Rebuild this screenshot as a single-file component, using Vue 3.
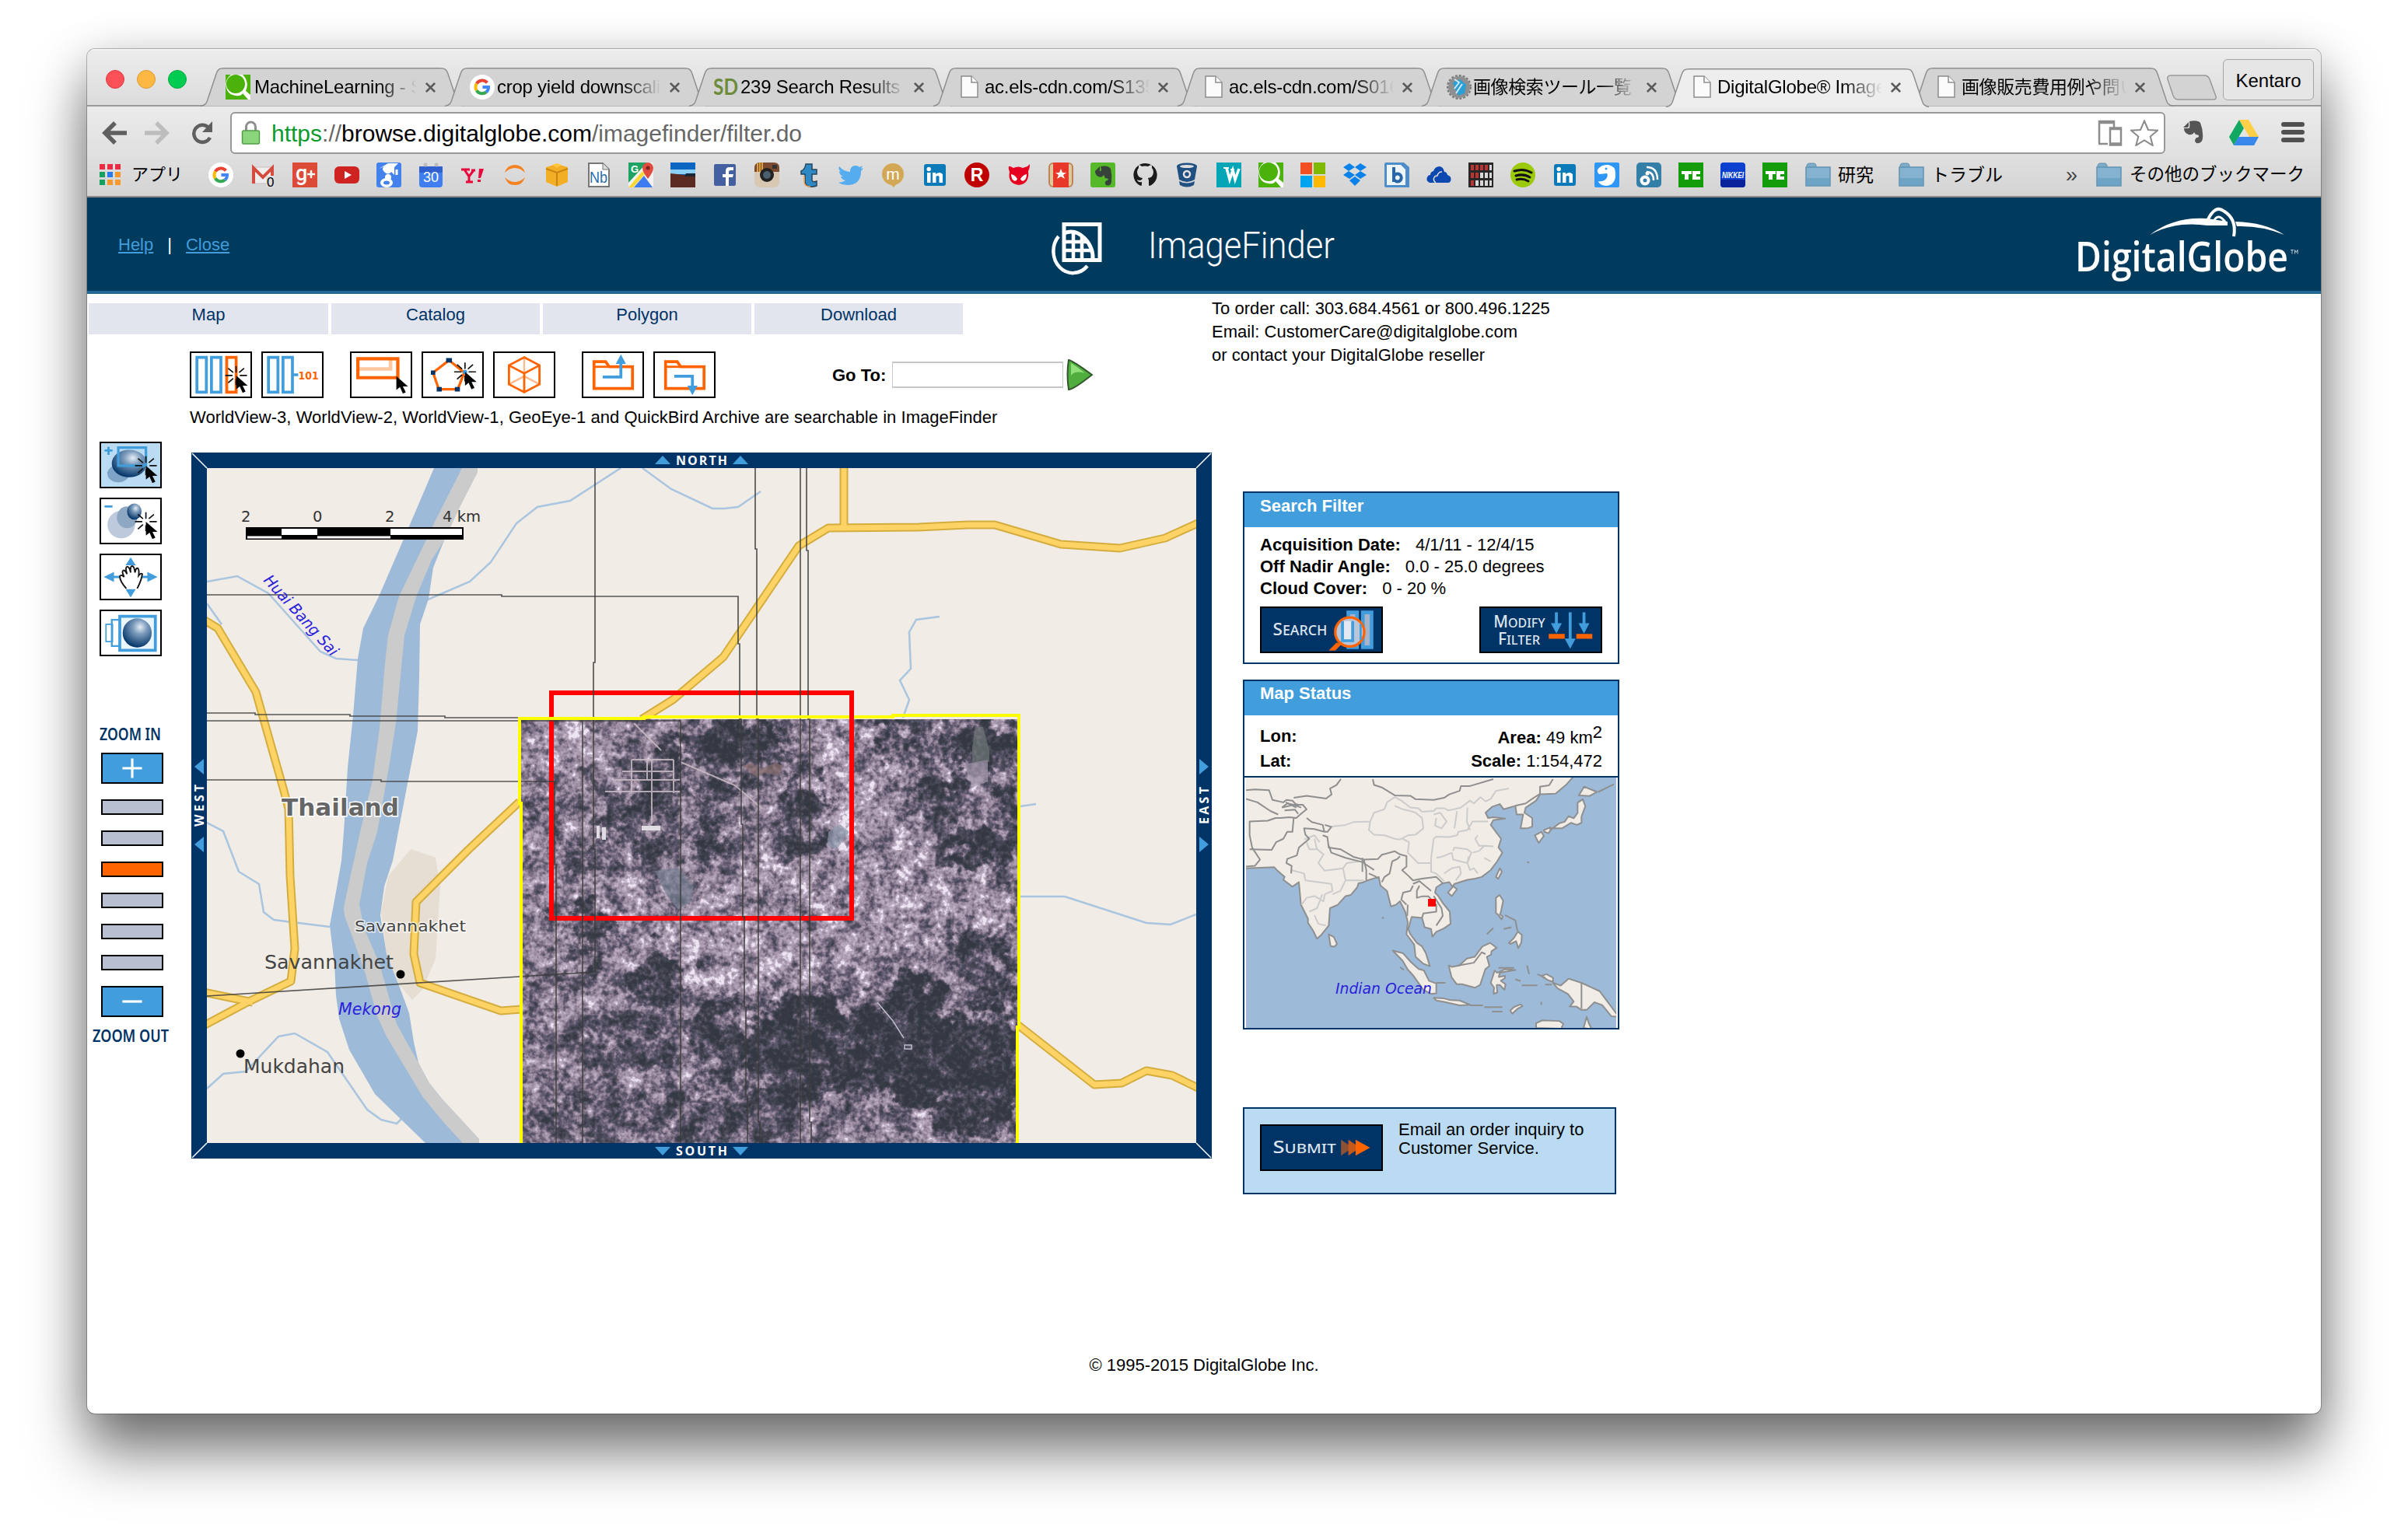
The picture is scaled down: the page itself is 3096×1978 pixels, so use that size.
<script setup>
const tabs = [
  { title: 'MachineLearning - S', icon: 'q', x: 69 },
  { title: 'crop yield downscaling', icon: 'g', x: 67 },
  { title: '239 Search Results f', icon: 'sd', x: 66 },
  { title: 'ac.els-cdn.com/S1352', icon: 'page', x: 66 },
  { title: 'ac.els-cdn.com/S0168', icon: 'page', x: 66 },
  { title: '画像検索ツール一覧 |', icon: 'globe', x: 66, cjk: true },
  { title: 'DigitalGlobe® Image F', icon: 'page', x: 66, active: true },
  { title: '画像販売費用例や問い合', icon: 'page', x: 66, cjk: true },
]

const google = '<path d="M24 9A10.5 10.5 0 0 0 7 10.5" stroke="#ea4335"/><path d="M7 10.5A10.5 10.5 0 0 0 7 21.5" stroke="#fbbc05"/><path d="M7 21.5A10.5 10.5 0 0 0 22.5 24" stroke="#34a853"/><path d="M22.5 24A10 10 0 0 0 26 16H16.5" stroke="#4285f4"/>'
const gIcon = `<circle cx="16" cy="16" r="16" fill="#fff"/><g transform="translate(3.2 3.2) scale(.8)" fill="none" stroke-width="5">${google}</g>`
const qIcon = '<rect width="32" height="32" fill="#fff"/><path d="M0 0h7Q-3 8 2 20Q5 26 13 27Q20 28 22 24L29 32H0zM22 0h10v26l-6-5Q31 9 22 0z" fill="#4bb20b"/><ellipse cx="13" cy="12" rx="12" ry="12" fill="#4bb20b"/>'
const inIcon = '<rect x="2" y="2" width="28" height="28" rx="3" fill="#0a7ab8"/><rect x="6" y="13" width="4.500" height="13" fill="#fff"/><circle cx="8.200" cy="8.500" r="2.700" fill="#fff"/><path d="M13 13h4v2q5-4 9 0v11h-4.500v-8q-2-2-4 0v8H13z" fill="#fff"/>'
const tcIcon = '<rect width="32" height="32" fill="#149c0b"/><path d="M4 11h13v4h-4v7H8v-7H4zM18 11h10v4h-5v3h5v4H18z" fill="#fff"/>'

const tabIcons = {
  q: qIcon,
  g: gIcon,
  sd: '<text x="-1" y="26" font-family="Lato" font-size="29" font-weight="bold" fill="#6c8c3a" textLength="32" lengthAdjust="spacingAndGlyphs">SD</text>',
  page: '<path d="M4 2h13l8 8v19H4z" fill="#fbfbfb" stroke="#8d8d8d" stroke-width="1.500"/><path d="M17 2v8h8" fill="#fff" stroke="#8d8d8d" stroke-width="1.500"/>',
  globe: '<circle cx="16" cy="16" r="14" fill="#8d8f90"/><circle cx="16" cy="16" r="15" fill="none" stroke="#777" stroke-width="2" stroke-dasharray="3 2"/><path d="M8 10l9-4 8 7-2 11-8 3-4-8z" fill="#299fd5"/><path d="M10 6l6 4-6 8M20 12l-8 12" stroke="#cfe9f5" stroke-width="2" fill="none"/>',
}

const bookmarks = [
  gIcon,
  '<path d="M3 6h26v21H3z" fill="#eee" stroke="#c9c0bd"/><path d="M4 27V7l12 12L28 7v20" fill="none" stroke="#d54b3d" stroke-width="4"/><rect x="20" y="17" width="11" height="15" fill="#ddd"/><text x="21" y="31" font-size="17" font-family="Liberation Sans" fill="#000">0</text>',
  '<rect width="32" height="32" fill="#dc4a38"/><text x="4" y="23" font-family="Roboto" font-size="27" font-weight="500" fill="#fff">g</text><path d="M24 10v10M19 15h10" stroke="#fff" stroke-width="2.500"/>',
  '<rect y="5" width="32" height="22" rx="6" fill="#cf2322"/><path d="M13 11l9 5-9 5z" fill="#fff"/>',
  '<rect width="32" height="32" rx="3" fill="#4382ec"/><path d="M3 8L15 1h13l-5 5v10l-4-4q-4 5-9 0-4-4 0-7z" fill="#fff"/><circle cx="15" cy="19" r="4" fill="#fff"/><ellipse cx="13" cy="26" rx="8" ry="6" fill="#fff"/><ellipse cx="13" cy="26" rx="4" ry="2.500" fill="#4382ec"/><path d="M26 9v7" stroke="#fff" stroke-width="3"/>',
  '<path d="M1 5h30v23q0 4-4 4H5q-4 0-4-4z" fill="#3f7df0"/><path d="M1 5h30v8H1z" fill="#3060d0"/><circle cx="9" cy="3" r="2.500" fill="#bbb"/><circle cx="23" cy="3" r="2.500" fill="#bbb"/><text x="16" y="25" text-anchor="middle" font-size="18" font-family="Liberation Sans" fill="#fff">30</text>',
  '<path d="M1 9h11M5 9l6 9 6-8M14 10h5M11 17v7M7 25h9" stroke="#e8063a" stroke-width="3" fill="none"/><path d="M24 8h6l-4 12h-3zM22 22h4v3h-4z" fill="#e8063a"/>',
  '<path d="M3 13Q6 3 16 3T29 13Q23 7 16 7T3 13zM3 19Q6 29 16 29T29 19Q23 25 16 25T3 19z" fill="#f58220"/>',
  '<path d="M2 6l14-4 14 4v19l-14 6-14-6z" fill="#f2ae24"/><path d="M2 8l14 5 14-5M16 13v17" stroke="#c98512" stroke-width="2" fill="none"/><path d="M10 3l6-2 6 2-6 4z" fill="#ffc83d"/>',
  '<path d="M3 1h18l8 8v22H3z" fill="#fff" stroke="#777" stroke-width="2"/><path d="M21 1v8h8" fill="#ddd" stroke="#777"/><text x="4" y="26" font-family="Liberation Sans" font-size="21" fill="#2a6ea5" textLength="23" lengthAdjust="spacingAndGlyphs">Nb</text>',
  '<rect x="0" y="0" width="32" height="32" rx="3" fill="#f2f2f2"/><path d="M0 0h24L0 26z" fill="#1ea362"/><path d="M0 32L18 11l3 4L6 32z" fill="#fdd835"/><path d="M7 32L20 17l11 15z" fill="#3f7bf0"/><path d="M25 0a7 7 0 0 1 7 7q0 5-7 14-7-9-7-14a7 7 0 0 1 7-7z" fill="#df4b3e"/><circle cx="25" cy="7" r="2.500" fill="#7b231c"/><text x="3" y="13" font-size="13" font-family="Liberation Sans" font-weight="bold" fill="#fff">G</text>',
  '<rect width="32" height="32" fill="#0b66c2"/><path d="M0 9h32v6H0z" fill="#8cd0f5"/><path d="M0 14l18 2 14 1v15H0z" fill="#5b2a20"/><path d="M20 14h12v4H18z" fill="#1c2733"/>',
  '<rect x="2" y="2" width="28" height="28" rx="2" fill="#4460a0"/><path d="M17 30V19h-4v-4h4v-4q0-5 5-5h5v4h-3q-3 0-3 2v3h6l-1 4h-5v11z" fill="#fff"/>',
  '<rect y="0" width="32" height="32" rx="7" fill="#d8c8b2"/><path d="M0 12V7q0-7 7-7h18q7 0 7 7v5z" fill="#7b4a30"/><path d="M4 1v11M7 0v12M10 0v12" stroke="#d9a03c" stroke-width="2"/><circle cx="16" cy="16" r="9" fill="#222"/><circle cx="16" cy="16" r="5" fill="#4a5f6e"/><rect x="23" y="3" width="6" height="5" fill="#333"/>',
  '<path d="M12 2h8v7h6v6h-6v8q1 3 6 1v6q-14 4-15-6v-9H6V11q5-2 6-9z" fill="#2f89c5" stroke="#27455c" stroke-width="1.500"/><path d="M10 17v8q0 6 8 6" stroke="#f0a050" stroke-width="1.500" fill="none"/>',
  '<path d="M1 5q6 7 14 7 0-8 7-8 3 0 5 2l4-2-2 4 3-1-3 4q0 18-18 18-6 0-11-3 5 0 9-3-5-1-6-5h3q-5-2-5-7l3 1q-5-3-3-7z" fill="#55acee"/>',
  '<circle cx="16" cy="15" r="14" fill="#d2a855"/><path d="M12 27l5 5 4-5z" fill="#d2a855"/><text x="16" y="22" text-anchor="middle" font-family="Liberation Sans" font-size="21" fill="#fff">m</text>',
  inIcon,
  '<circle cx="16" cy="16" r="16" fill="#bf0000"/><text x="16" y="24" text-anchor="middle" font-family="Liberation Sans" font-weight="bold" font-size="23" fill="#fff">R</text>',
  '<path d="M3 9Q2 4 5 5l4 2q6-3 12 0l6-2 3-3q0 6-2 9 2 16-12 18Q1 27 4 12z" fill="#e60020"/><path d="M6 15q5 1 8 6-1 4-5 2-3-3-3-8zM26 15q-5 1-8 6 1 4 5 2 3-3 3-8z" fill="#fff"/>',
  '<rect x="1" y="1" width="30" height="30" rx="5" fill="#dfc7a0" stroke="#c08353" stroke-width="2"/><rect x="6" y="0" width="20" height="32" fill="#e8382a"/><path d="M16 8l2 5h5l-4 3 2 5-5-3-5 3 2-5-4-3h5z" fill="#fff"/>',
  '<rect width="32" height="32" rx="3" fill="#55b92a"/><path d="M6 11l6-6v5q0 1-1 1zM13 5q10-2 13 3 2 8 1 17-1 6-7 4-3-4 1-6 2 0 2-2l-4-1-2-4q-2 4-7 2-4-2-4-7h7q1 0 1-2z" fill="#37423a"/>',
  '<path d="M16 1a15 15 0 0 0-5 29q1 0 1-2v-3q-5 1-6-3 3 2 6 0l1-2q-7-1-7-8 0-3 2-5v-4q2 0 4 2 4-1 8 0 3-2 5-2v4q2 2 2 5 0 7-7 8l1 3v6q0 1 1 1A15 15 0 0 0 16 1z" fill="#1b1b1b"/>',
  '<ellipse cx="16" cy="5" rx="13" ry="4.500" fill="#205081"/><path d="M3 5l3 17q10 6 20 0l3-17z" fill="#205081"/><ellipse cx="16" cy="5" rx="9" ry="2" fill="#dedede"/><circle cx="16" cy="15" r="4" fill="none" stroke="#e4e4e4" stroke-width="2.500"/><path d="M6 24q10 5 20 0l-1 5q-9 5-18 0z" fill="#205081"/>',
  '<rect width="32" height="32" fill="#03a5b7"/><path d="M13 7l4 15 4-12 3 12 5-14" stroke="#fff" stroke-width="3.500" fill="none"/><path d="M9 7h7M18 9h5" stroke="#fff" stroke-width="2"/>',
  qIcon,
  '<path d="M0 0h15v15H0z" fill="#f25022"/><path d="M17 0h15v15H17z" fill="#7fba00"/><path d="M0 17h15v15H0z" fill="#00a4ef"/><path d="M17 17h15v15H17z" fill="#ffb900"/>',
  '<path d="M9 1l7 5-8 5-7-5zM23 1l8 5-8 5-7-5zM1 16l7-5 8 5-7 5zM31 16l-8-5-7 5 7 5zM9 23l7-5 7 5-7 7z" fill="#0a82ea"/>',
  '<path d="M2 0h23l7 6v26H2q-2 0-2-2V2q0-2 2-2z" fill="#4f8dc8"/><path d="M3 3h18l6 6v20H3z" fill="#eef5fb"/><path d="M12 6v19M12 18a5 5 0 1 1 0 3" stroke="#2967a8" stroke-width="4" fill="none"/>',
  '<path d="M4 26q-5-2-3-7 1-3 4-3 0-4 4-5 2-6 8-6 5 1 6 7 3 0 4 4 6 2 4 8-1 2-3 2z" fill="#0d47b0"/><path d="M12 26q-4-3-2-7 1-2 4-2 1-5 6-5" stroke="#dedede" stroke-width="1.500" fill="none"/>',
  '<rect width="32" height="32" fill="#272727"/><path d="M3 3h4v7H3zM9 3h4v7H9zM15 3h4v7h-4zM21 3h4v7h-4zM3 13h4v7H3zM9 13h4v7H9zM3 23h4v7H3z" fill="#b33"/><path d="M27 3h3v7h-3zM15 13h4v7h-4zM21 13h4v7h-4zM27 13h3v7h-3zM9 23h4v7H9zM15 23h4v7h-4zM21 23h4v7h-4zM27 23h3v7h-3z" fill="#d8d8d8"/>',
  '<circle cx="16" cy="16" r="16" fill="#9aca0b"/><path d="M5 11q12-4 22 2M7 17q10-3 18 2M8 22q8-2 15 2" stroke="#111" stroke-width="3" fill="none" stroke-linecap="round"/>',
  inIcon,
  '<rect width="32" height="32" rx="2" fill="#2e97f5"/><path d="M4 9Q9 2 18 3q9 2 9 10 1 10-5 15-7 4-14 0-3-2-3-4 6 1 10-3 3-4 1-7l-10 1Q3 12 4 9z" fill="#fff"/><circle cx="15" cy="8" r="1.500" fill="#2e97f5"/>',
  '<rect width="32" height="32" rx="5" fill="#337fa8"/><circle cx="11" cy="23" r="6.500" fill="#fff"/><circle cx="11" cy="23" r="2.500" fill="#337fa8"/><path d="M13 12q9 0 9 11M13 6q14 0 14 16" stroke="#fff" stroke-width="2.500" fill="none"/><circle cx="14" cy="14" r="2.500" fill="#fff"/>',
  tcIcon,
  '<rect width="32" height="32" rx="4" fill="#0a3fd0"/><path d="M0 22h32v6q0 4-4 4H4q-4 0-4-4z" fill="#08239c"/><text x="2" y="20" font-size="10" font-family="Liberation Sans" font-style="italic" font-weight="bold" fill="#fff" textLength="28" lengthAdjust="spacingAndGlyphs">NIKKEI</text>',
  tcIcon,
]
const folder = '<path d="M2 7V3l2-2h8l2 2v4z" fill="#7fabc6" stroke="#6794b0"/><rect x="1" y="6" width="31" height="24" fill="#84b2cf" stroke="#5f93b3" stroke-width="1.500"/><path d="M2 20h29v9H2z" fill="#6da3c4"/>'

const cursor = '<path d="M0 0l0 19 5-4 4 9 4-2-4-8h7z" fill="#000"/>'
const burst = '<path d="M0-4v-9M-4-4l-7-6M-5 0h-10M-4 4l-7 6M0 5v8M4-4l7-6M5 0h10" stroke="#111" stroke-width="1.800"/>'
const folderShape = '<path d="M14 49V12h16l5 7h32v30z" stroke="#ff6400" stroke-width="4" fill="none"/><path d="M14 19h20" stroke="#ff6400" stroke-width="3"/>'

const toolGroups = [
  [
    `<g fill="none" stroke-width="4"><path d="M7 6h13v48H7zM27 6h13v48H27z" stroke="#419ddb"/><path d="M48 6h13v48H48z" stroke="#ff6400"/></g><g transform="translate(61 31)">${burst}${cursor}</g>`,
    '<g fill="none" stroke-width="4" stroke="#419ddb"><path d="M7 6h13v48H7zM27 6h13v48H27zM42 30h6"/></g><text x="48" y="36" font-family="DejaVu Sans" font-weight="bold" font-size="15" fill="#ff6400" textLength="28" lengthAdjust="spacingAndGlyphs">101</text>',
  ],
  [
    `<path d="M53 8v14H8" stroke="#ffc8a0" stroke-width="5" fill="none"/><path d="M8 8h55v26H8z" stroke="#ff6400" stroke-width="4.500" fill="none"/><g transform="translate(61 32)">${cursor}</g>`,
    `<path d="M35 10L13 27l8 23h26l9-23z" stroke="#ff6400" stroke-width="3.500" fill="none"/><path d="M31 7h8v6h-8zM10 24h6v6h-6zM18 47h7v6h-7zM43 47h7v6h-7z" fill="#036"/><g transform="translate(57 26)">${burst}<circle r="3" fill="#419ddb"/>${cursor}</g>`,
    '<g fill="none"><path d="M40 6v22M19 43l21-11 21 11" stroke="#ffb98c" stroke-width="2.500"/><path d="M40 6l21 11v26L40 54 19 43V17zM19 17l21 11 21-11M40 28v26" stroke="#ff6400" stroke-width="3"/></g>',
  ],
  [
    `${folderShape}<path d="M26 33h25V12" stroke="#419ddb" stroke-width="4" fill="none"/><path d="M51 2l7 13H44z" fill="#419ddb"/>`,
    `${folderShape}<path d="M26 32h25v16" stroke="#419ddb" stroke-width="4" fill="none"/><path d="M51 58l-7-13h14z" fill="#419ddb"/>`,
  ],
]

const sideTools = [
  { on: true, art: `<path d="M4 10h11M9.500 5v11M8 41h5" stroke="#419ddb" stroke-width="3"/><ellipse cx="23" cy="42" rx="15" ry="12" fill="#7fa3c6"/><ellipse cx="38" cy="28" rx="24" ry="19" fill="url(#sphere)"/><path d="M23 6h38v25H23z" fill="none" stroke="#419ddb" stroke-width="3.500"/><g transform="translate(61 31)">${burst}${cursor}</g>` },
  { art: `<path d="M4 10h11" stroke="#419ddb" stroke-width="3"/><ellipse cx="27" cy="35" rx="19" ry="19" fill="#bccadb"/><ellipse cx="35" cy="25" rx="14" ry="15" fill="#8ea7c2"/><ellipse cx="45" cy="17" rx="10" ry="11" fill="url(#sphere)"/><g transform="translate(61 31)">${burst}${cursor}</g>` },
  { art: '<path d="M3 30l14-7v14zM77 30l-14-7v14zM40 3l7 11H33zM40 58l7-11H33z" fill="#419ddb"/><path d="M14 30h52" stroke="#419ddb" stroke-width="3"/><path d="M34 46Q25 36 25 29q2-3 6 1-4-8-1-9 2-1 5 5-3-9 0-10 3-1 5 8-1-9 2-9t4 9q1-7 4-6 2 2 1 10 3-4 5-2-1 8-7 20" fill="#fff" stroke="#111" stroke-width="2"/>' },
  { art: '<g fill="none" stroke="#419ddb"><path d="M6 18h9v24H6z" stroke-width="1.800"/><path d="M14 12h12v36H14z" stroke-width="2.500"/><path d="M25 7h49v47H25z" fill="#eaf5fc" stroke-width="4"/></g><ellipse cx="49" cy="30" rx="20" ry="20" fill="url(#sphere)"/>' },
]

const roads = [
  'M262 797L280 808 329 890 365 1017 371 1040 373 1127 379 1220 374 1262 320 1288 262 1319',
  'M262 1276L325 1289',
  'M668 1031L602 1093 535 1160 532 1227 540 1264 644 1300 670 1298',
  'M825 925L865 900 930 845 1027 702 1065 679 1181 678 1244 675 1279 675 1364 700 1440 705 1498 692 1542 672',
  'M1085 600V679',
  'M1306 1316L1407 1395 1442 1393 1474 1377 1507 1383 1542 1400',
]
const streams = [
  'M266 748L305 741 345 763 412 838 432 847 460 849', 'M266 776L285 803',
  'M798 602L733 644 691 652 664 673 631 723 604 748 548 772',
  'M826 602L863 629 916 654 931 654 949 652 978 632',
  'M1208 793L1178 797 1169 813 1171 860 1157 875 1169 900 1161 923',
  'M1332 1034L1312 1037', 'M1311 1153H1369L1474 1187 1505 1189 1538 1176',
  'M266 1058L287 1069 307 1121 333 1137 339 1173 352 1183 424 1192',
  'M266 1400L287 1381 316 1378 358 1333 379 1329 421 1353 472 1427 490 1440 510 1445 516 1439',
]
const strips = [
  'M266 765H645V767H949V828H951V925H953V1060H955V1179H957V1295H959V1410H961V1470',
  'M765 602V852H763V1092H765V1250L668 1256 266 1281',
  'M266 917H328V919H450V921H572V923H668', 'M266 927H749V1470', 'M749 927H875V1470',
  'M266 1003H490V1005H713V1112H715V1470',
  'M971 602V706H973V925H975V1443H977V1470', 'M1029 602V1470', 'M1037 602V708H1039V925H1041V1443H1043V1470',
]
/* [cx, cy, rx, ry, grey level] */
const patches = [
  [720, 950, 60, 34, 185], [765, 972, 16, 12, 255], [757, 940, 8, 30, 240], [680, 975, 14, 12, 220], [925, 1200, 230, 74, 172],
  [1110, 1160, 190, 66, 178], [1150, 1225, 80, 30, 172], [945, 1245, 70, 34, 205], [1068, 1000, 28, 85, 190], [1130, 1010, 34, 60, 172], [1085, 1065, 14, 26, 225],
  [695, 1100, 35, 60, 155], [690, 1350, 28, 90, 148], [820, 1160, 50, 22, 178], [1150, 1080, 50, 40, 175],
  [940, 957, 66, 34, 15], [985, 965, 30, 20, 10], [1030, 1030, 26, 36, 35], [920, 1025, 24, 34, 60], [1140, 938, 42, 12, 20],
  [1165, 945, 18, 20, 40], [1265, 955, 50, 34, 10], [1212, 1018, 32, 42, 30], [1265, 1085, 50, 28, 18], [1297, 1030, 12, 20, 25],
  [1243, 1212, 26, 26, 45], [1280, 1260, 28, 32, 25], [1170, 1340, 58, 86, 0], [1262, 1380, 60, 80, 5], [1250, 1440, 60, 24, 20],
  [1050, 1350, 95, 66, 12], [925, 1335, 40, 44, 60], [1020, 1087, 24, 20, 60], [905, 1095, 20, 24, 40], [840, 1088, 24, 20, 40],
  [750, 1106, 16, 8, 50], [760, 1200, 22, 40, 44], [845, 1258, 44, 30, 35], [915, 1326, 30, 28, 28], [800, 1345, 70, 30, 78],
  [845, 998, 30, 24, 45], [825, 1037, 50, 18, 35], [862, 950, 14, 24, 50], [795, 1060, 20, 20, 60], [760, 1440, 110, 40, 100],
  [940, 1440, 100, 40, 72], [1240, 1000, 16, 24, 200], [880, 1145, 20, 24, 140], [1170, 1120, 40, 10, 190],
]
const grid = 'M812 977H866M800 992H866M790 1003H875M778 1018H875M812 977V1018M838 977V1060M866 977V1020M832 977V1003M815 930L850 965M875 980L945 1010 980 1040'

const coast = 'M66 575L175 572 185 580 215 600 210 608 245 628 270 615 278 680 305 720 305 732 325 755 340 778 355 768 385 740 390 690 420 680 450 655 470 652 495 630 500 618 515 616 535 610 560 604 578 600 585 625 610 640 625 685 645 680 660 670 680 700 690 730 685 765 715 795 720 830 750 850 775 857 760 820 745 800 725 790 700 765 692 750 705 715 745 718 755 745 780 750 785 772 800 758 830 748 855 735 852 700 825 675 808 655 795 645 800 630 825 618 850 615 862 628 870 620 920 608 950 605 975 600 1010 580 1035 555 1055 530 1040 515 1050 490 1030 470 1010 450 1020 436 1065 432 1020 428 1000 430 990 415 1015 398 1045 390 1060 405 1105 395 1110 420 1135 420 1125 460 1150 460 1170 455 1170 430 1140 415 1145 400 1185 380 1200 362 1260 360 1300 335 1330 310H60V575z'
const islands = [
  'M845 645l20-18 15 8-20 20z', 'M1030 600l15-25 8 10-14 20z', 'M385 765l20 8 12 20-10 8-15-2z',
  'M1180 480l25-10 10 12-20 20zM1215 465l25-8 0 8 35-20 20-4 15-16 20 6 15-15 0-30 20-10 10 20-15 30 0 18-18 6-22-6-35 16-40 0-12 14-16-4zM1350 365l20-25 50 15-30 12z',
  'M632 812l40 8 30 25 30 20 20 4 20 30 28 8 0 28-20 2-30-12-40-42-20-16-20-26z', 'M790 948l40 2 20 4 40 2 40 12-40 2-60-10-30-4z',
  'M848 855l12 4 28-4 30-20 30-5 30-30 30-10 25 14-20 10-2 10-16 6 10 26-16 10-20 45-20 8-50-10-20 0-20-20z', 'M1010 905l15-35 10 6 30-10 40 2-60 8-4 12 24-3 0 6-16 8 18 10-4 16-18-14-12 0 2 22-14 4 2-18z',
  'M1030 660l14-8 14 16-8 30-4 10 10 6-4 8-14-14-8-4zM1080 790l20-15 15-18 15 10-2 22-12 16-8-20-22 8z', 'M1085 985l14-10 26-8 8 5-20 8-20 14z',
  'M1205 885l20-5 25 10 0 12-20-5zM1250 905l30 8 30-20 50 12 70 24 20 20 40 40 15 14-30-2-35-32-30-8-30 22-20 0-20-10-25 0 15-14-22-22-40-16z',
  'M1185 1035l0-14 24-8 66 2 15 8-8 14zM1368 1035l12-32 8 18 12 18z',
]
const borders = 'M66 350L100 348 155 350 168 378 210 385 222 378 245 380 260 392 285 392 300 405 275 420 260 430 232 428 200 430 180 430 150 438 80 440 80 480 90 516 120 550 100 568 66 570M66 375L110 385 160 410 190 420M80 520L165 522 182 500 210 490 225 470 245 470 250 430 M300 430L320 442 362 450 368 470 330 462 290 460 295 478 310 490 270 515 262 538 225 548 222 560 242 568 240 590M205 400l20-12 24 4 30 8M215 408l40-2 12 12M250 372L300 366 375 374 396 362 390 345 415 335 432 318M555 318L560 335 590 342 640 365 700 366 720 376 790 378 830 372 850 362 890 352 895 338 930 338 1020 318M362 480L380 485 385 515 430 520 480 542 520 550 575 548 590 536 640 526 660 535 685 540 685 570 668 580 690 595 710 610 745 605 800 600 825 618M385 510L395 530 450 545 520 558M520 548L530 580 530 610M660 540L650 548 630 555 620 590 600 600 590 615M710 625L700 640 672 645 665 665 685 680M710 620L735 612 780 640 M735 625L725 640 725 660 745 656 770 656 800 680 800 700 750 705 745 718M790 655L820 690 825 712 800 740M690 680L688 712M370 450L395 456 380 470 365 470M1105 395L1145 388 1160 380 1200 360 1200 340 1235 336 1250 318M925 835L900 855'
const provinces = 'M395 455L450 450 480 442 545 440 560 415 600 405 610 385 640 370 665 380 700 400 730 402 745 412 790 410 800 402 830 402 845 408 870 405 895 400 930 380 945 388 970 370 990 382 1010 375 1030 352 1080 345M545 440L540 465 560 478 600 480 640 490 660 492 690 480 720 478 750 460 745 430 720 415 700 410 670 405 640 395M670 490L695 500 690 530 730 560 780 560 780 545 790 490 800 484 850 485 880 480 885 470 920 465 940 440 1000 440M790 420L815 415 840 440 820 460 795 452 800 430M880 410L870 460M920 400L918 440 930 465M780 560L780 585 800 590 830 612M830 590L860 575 890 570 895 590 875 610M860 530L865 550 920 560 925 540M800 545L820 542 860 530M865 525L870 515 920 520 935 530 920 560 930 580 945 575 960 590M940 530L965 525 985 510 1020 512M960 480L950 490 965 510 985 510M985 545L1010 555M330 490L340 520 365 535 345 560 370 582 440 575 450 610 520 610M350 500L330 480 290 492M300 500L310 520 340 520M240 580L290 590 295 610 395 620 400 640 370 650 365 670 330 655 300 660 280 680M310 700L340 690 360 650M330 710L345 735 375 740M440 575L455 560 500 555M450 610L430 640 400 650'
</script>

<template>
  <div class="desktop">
    <svg class="defs" width="0" height="0">
      <defs>
        <radialGradient id="sphere" cx=".6" cy=".3" r=".7">
          <stop offset="0" stop-color="#e6eef6" /><stop offset=".35" stop-color="#7d9cbd" /><stop offset="1" stop-color="#043668" />
        </radialGradient>
      </defs>
    </svg>
    <div class="window">
      <div class="tabbar">
        <div class="lights"><i class="red" /><i class="amber" /><i class="green" /></div>
        <div class="tabs">
          <div v-for="(t, i) in tabs" :key="i" class="tab" :class="{ active: t.active }">
            <svg class="shape" viewBox="0 0 338 50">
              <path d="M0 49.500C8 48 8 44 10 38L20 8C22 2 24 .700 30 .700H308C314 .700 316 2 318 8L328 38C330 44 330 48 338 49.500" />
            </svg>
            <svg class="favicon" viewBox="0 0 32 32" v-html="tabIcons[t.icon]" />
            <span class="title" :class="{ cjk: t.cjk }" :style="{ width: 278 - t.x + 'px', marginLeft: t.x - 64 + 'px' }">{{ t.title }}</span>
            <svg class="close" viewBox="0 0 16 16"><path d="M2 2l12 12M14 2L2 14" /></svg>
          </div>
        </div>
        <svg class="newtab" viewBox="0 0 66 34"><path d="M6 1h43q5 0 7 5l8 22q1 4-3 4H16q-5 0-7-5L2 6q-1-5 4-5z" /></svg>
        <div class="user">Kentaro</div>
      </div>

      <div class="toolbar">
        <svg class="nav" viewBox="0 0 160 40">
          <g fill="none" stroke-width="5.500">
            <path d="M35 20H9M20 7L7 20l13 13" stroke="#5f5f5f" /><path d="M58 20h26M73 7l13 13-13 13" stroke="#bdbdbd" />
            <path d="M140 13A11 11 0 1 0 142 26" stroke="#5f5f5f" stroke-width="4.500" />
          </g>
          <path d="M145 5v14h-13z" fill="#5f5f5f" />
        </svg>
        <div class="omnibox">
          <svg class="lock" viewBox="0 0 24 32"><path d="M6 14V8a6 6 0 0 1 12 0v6" fill="none" stroke="#8f8f8f" stroke-width="3" /><rect x="1" y="13" width="22" height="17" rx="2" fill="#8bd67b" stroke="#4f9f45" stroke-width="1.500" /></svg>
          <span class="url"><b>https</b>://<em>browse.digitalglobe.com</em>/imagefinder/filter.do</span>
          <svg class="devices" viewBox="0 0 32 34"><path d="M2 31V2h19v8M1 4h21M1 31h12M2 30V4" fill="none" stroke="#8c8c8c" stroke-width="2.500" /><path d="M16 10.500h14v22H16zM16 12h14M16 30.500h14" fill="none" stroke="#8c8c8c" stroke-width="2.500" /></svg>
          <svg class="star" viewBox="0 0 36 34"><path d="M18 1.500l5 11.500 12 .800-9.300 7.700 3 11.500L18 26.500 7.300 33l3-11.500L1 13.800 13 13z" fill="#fff" stroke="#8a8a8a" stroke-width="2" /></svg>
        </div>
        <svg class="ext elephant" viewBox="0 0 26 30"><path d="M0 9L7 2v5q0 2-2 2zM8 1q11-2 14 2 4 10 3 20-1 7-8 6-4-3 0-7 3 0 3-2 0-2-4-2l-2-3q-2 4-7 3-6-2-6-8h6q2 0 1-9z" fill="#555" /></svg>
        <svg class="ext drive" viewBox="0 0 38 33"><path d="M13 0L0 22l6 11L19 11z" fill="#11a861" /><path d="M13 0h12l13 22H26z" fill="#ffcf48" /><path d="M12 22h26l-6 11H6z" fill="#3787ed" /></svg>
        <div class="burger"><i /><i /><i /></div>
      </div>

      <div class="bookmarks">
        <svg class="apps" viewBox="0 0 28 28"><path d="M0 1h7v7H0zM10 1h7v7h-7zM20 1h7v7h-7z" fill="#ee2b45" /><path d="M0 11h7v7H0z" fill="#15a05d" /><path d="M10 11h7v7h-7z" fill="#2a7cee" /><path d="M20 11h7v7h-7zM10 21h7v7h-7zM20 21h7v7h-7z" fill="#f6982b" /><path d="M0 21h7v7H0z" fill="#15a05d" /></svg>
        <span class="applabel">アプリ</span>
        <div class="marks"><svg v-for="(b, i) in bookmarks" :key="i" viewBox="0 0 32 32" v-html="b" /></div>
        <svg class="folder" viewBox="0 0 33 32" v-html="folder" /><span class="f1">研究</span>
        <svg class="folder" viewBox="0 0 33 32" v-html="folder" /><span class="f2">トラブル</span>
        <span class="more">»</span>
        <svg class="folder" viewBox="0 0 33 32" v-html="folder" /><span class="f3">その他のブックマーク</span>
      </div>

      <header class="banner">
        <nav><a>Help</a><span>|</span><a>Close</a></nav>
        <svg class="brand" viewBox="1352 280 368 76">
          <g fill="none" stroke="#fff">
            <path d="M1368 288.500H1414V334.500H1368z" stroke-width="5" />
            <path d="M1361 304A25 28 0 1 0 1398 342" stroke-width="4.500" />
            <path d="M1368 300Q1382 294 1394 306Q1406 318 1405 334" stroke-width="5" />
            <path d="M1380 298V332M1391 304V332M1370 311H1398M1370 322H1405" stroke-width="4.500" />
          </g>
          <text x="1476" y="332" textLength="240" lengthAdjust="spacingAndGlyphs">ImageFinder</text>
        </svg>
        <svg class="dg" viewBox="2666 260 290 104">
          <path d="M2764 302Q2796 278 2838 281L2864 285V290H2838Q2796 284 2764 302z" fill="#fff" />
          <path d="M2838 284Q2848 262 2860 272Q2876 282 2872 304" fill="none" stroke="#fff" stroke-width="4" />
          <path d="M2846 285Q2852 272 2862 287" fill="none" stroke="#fff" stroke-width="3" />
          <path d="M2874 285Q2912 286 2937 302Q2908 290 2876 291z" fill="#fff" />
          <text x="2668" y="349" textLength="274" lengthAdjust="spacingAndGlyphs">DigitalGlobe</text>
          <path d="M2945 321.500h4M2947 321.500v5M2950.500 326.500v-5l1.800 3 1.800-3v5" fill="none" stroke="#c9d6e0" stroke-width=".9" />
        </svg>
      </header>

      <main class="page">
        <section class="left">
          <div class="menu"><span class="first">Map</span><span>Catalog</span><span>Polygon</span><span>Download</span></div>
          <div class="tools">
            <div v-for="(g, i) in toolGroups" :key="i" class="group">
              <svg v-for="(t, j) in g" :key="j" viewBox="0 0 80 60" v-html="t" />
            </div>
            <b class="goto">Go To:</b><div class="input" />
            <svg class="go" viewBox="0 0 36 42"><path d="M4 2q4 0 30 19Q10 40 4 40 1 20 4 2z" fill="#4fae3d" stroke="#35552f" stroke-width="2" /><path d="M7 6q10 6 18 13Q12 15 7 22z" fill="#8fe07a" /></svg>
          </div>
          <p class="note">WorldView-3, WorldView-2, WorldView-1, GeoEye-1 and QuickBird Archive are searchable in ImageFinder</p>
          <div class="workspace">
            <aside class="side">
              <svg v-for="(s, i) in sideTools" :key="i" class="tool" :class="{ on: s.on }" viewBox="0 0 80 60" v-html="s.art" />
              <svg class="zlabel zin" viewBox="0 0 100 24"><text x="10" y="20" textLength="79" lengthAdjust="spacingAndGlyphs">ZOOM IN</text></svg>
              <div class="zbtn"><svg viewBox="0 0 80 40"><path d="M26 20h28M40 6v28" /></svg></div>
              <i v-for="n in 6" :key="n" class="level" :class="{ cur: n === 3 }" />
              <div class="zbtn last"><svg viewBox="0 0 80 40"><path d="M26 20h28" /></svg></div>
              <svg class="zlabel" viewBox="0 0 100 24"><text x="1" y="20" textLength="98" lengthAdjust="spacingAndGlyphs">ZOOM OUT</text></svg>
            </aside>

            <svg class="map" viewBox="246 582 1312 908">
              <defs>
                <clipPath id="inner"><rect x="266" y="602" width="1272" height="868" /></clipPath>
                <clipPath id="shot"><rect x="669" y="925" width="640" height="545" /></clipPath>
                <filter id="terrain" filterUnits="userSpaceOnUse" x="620" y="880" width="740" height="640" color-interpolation-filters="sRGB">
                  <feGaussianBlur in="SourceGraphic" stdDeviation="4" result="soft" />
                  <feTurbulence type="fractalNoise" baseFrequency=".04" numOctaves="5" seed="7" result="n1" />
                  <feDisplacementMap in="soft" in2="n1" scale="85" xChannelSelector="R" yChannelSelector="G" result="bent" />
                  <feColorMatrix in="n1" values="0 0 1 0 0 0 0 1 0 0 0 0 1 0 0 0 0 0 0 1" result="coarse" />
                  <feComposite in="bent" in2="coarse" operator="arithmetic" k2=".8" k3="1.050" k4="-.43" result="mix" />
                  <feTurbulence type="fractalNoise" baseFrequency=".16" numOctaves="3" seed="21" />
                  <feColorMatrix values="0 1 0 0 0 0 1 0 0 0 0 1 0 0 0 0 0 0 0 1" result="fine" />
                  <feComposite in="mix" in2="fine" operator="arithmetic" k2="1" k3=".9" k4="-.45" />
                  <feColorMatrix values="1 0 0 0 0 0 1 0 0 0 0 0 1 0 0 0 0 0 0 1" />
                  <feComponentTransfer>
                    <feFuncR type="table" tableValues=".2 .24 .29 .36 .48 .6 .68 .76 .93" />
                    <feFuncG type="table" tableValues=".22 .25 .29 .34 .43 .54 .62 .7 .9" />
                    <feFuncB type="table" tableValues=".26 .29 .35 .42 .51 .62 .7 .79 .95" />
                  </feComponentTransfer>
                </filter>
              </defs>
              <rect x="246" y="582" width="1312" height="908" fill="#036" />
              <g clip-path="url(#inner)">
                <rect x="266" y="602" width="1272" height="868" fill="#f1ece6" />
                <path d="M528 1092L560 1103 566 1140 562 1200 560 1233 543 1273 530 1286 514 1267 497 1227 490 1173 499 1127z" fill="#e6ddd3" />
                <g fill="none" stroke="#a9c5df" stroke-width="2.500"><path v-for="s in streams" :key="s" :d="s" /></g>
                <path d="M558 602L526 677 488 765 467 808 460 847 454 920 447 987 442 1070 439 1107 432 1147 424 1190 430 1240 432 1280 436 1310 449 1350 482 1407 516 1440 547 1470H616L616 1465 568 1413 552 1393 538 1367 532 1340 526 1303 514 1270 497 1227 489 1177 494 1140 505 1107 512 1070 528 987 537 940 539 870 540 803 551 770 557 730 571 695 592 650 614 607V602z" fill="#9dbad8" />
                <path d="M594 602L558 673 539 713 513 767 499 817 495 853 488 937 479 1003 463 1070 452 1120 442 1167 443 1178 456 1213 470 1253 485 1307 497 1333 543 1410 570 1443 595 1470H616V1465L568 1413 552 1393 538 1367 510 1317 488 1240 468 1193 462 1163 472 1110 485 1070 500 987 509 930 520 817 536 765 555 720 571 695 592 650 614 607V602z" fill="#cbcbcb" />
                <g fill="none" stroke-linejoin="round"><path v-for="r in roads" :key="r" :d="r" stroke="#d4ad3f" stroke-width="11" /><path v-for="r in roads" :key="r + 'i'" :d="r" stroke="#fcd364" stroke-width="7" /></g>

                <g clip-path="url(#shot)">
                  <g filter="url(#terrain)">
                    <rect x="600" y="860" width="800" height="700" fill="#8c8c8c" />
                    <ellipse v-for="(p, i) in patches" :key="i" :cx="p[0]" :cy="p[1]" :rx="p[2]" :ry="p[3]" :fill="`rgb(${p[4]},${p[4]},${p[4]})`" />
                  </g>
                  <g opacity=".7">
                    <path d="M955 985l12-4 10 8 20-8 10 4-6 12-18-3-10 6z" fill="#866c6c" />
                    <path d="M1254 935h10l8 30v15h-22v-18z" fill="#6f7878" />
                    <path d="M1240 983l30-6v28l-20 8z" fill="#a398ac" />
                    <path d="M842 1120l30-4 20 24-4 20-16 10-18-24z" fill="#757e90" />
                    <path d="M1065 1070l15-10 12 10-16 22-12-4z" fill="#8793a6" />
                  </g>
                  <path :d="grid" fill="none" stroke="#c9bbc4" stroke-width="2" opacity=".85" />
                  <path d="M825 1062h24v6h-24zM767 1062h4v16h-4zM774 1064h5v16h-5z" fill="#e0dde2" />
                  <path d="M1128 1289l20 24 14 22M1163 1344h9v5h-9z" fill="none" stroke="#bdbccb" stroke-width="1.500" />
                </g>

                <path d="M709 891H1095V1181H709z" fill="none" stroke="#f00" stroke-width="6" />
                <g fill="none" stroke="#3c3c3c" stroke-opacity=".85" stroke-width="1.700"><path v-for="s in strips" :key="s" :d="s" /></g>
                <path d="M670 1474V1033H668V924H828V922H1148V920H1310V1321H1308V1474" fill="none" stroke="#ff0" stroke-width="4" />
                <path d="M1095 912V932" stroke="#f00" stroke-width="6" />

                <g class="scale">
                  <rect x="316" y="678" width="280" height="16" fill="#000" />
                  <path d="M362 680H408V688H362zM502 680H594V688H502zM318 689.500H362V692.500H318zM408 689.500H502V692.500H408z" fill="#fff" />
                  <text x="310" y="671">2</text><text x="402" y="671">0</text><text x="495" y="671">2</text>
                  <text x="569" y="671" textLength="49" lengthAdjust="spacingAndGlyphs">4 km</text>
                </g>
                <g class="labels">
                  <text transform="translate(338 747) rotate(48)" class="water" font-size="20" textLength="132" lengthAdjust="spacingAndGlyphs">Huai Bang Sai</text>
                  <text x="362" y="1049" class="country" textLength="151" lengthAdjust="spacingAndGlyphs">Thailand</text>
                  <text x="456" y="1198" class="halo" font-size="20" textLength="143" lengthAdjust="spacingAndGlyphs">Savannakhet</text>
                  <text x="340" y="1246" font-size="24" textLength="166" lengthAdjust="spacingAndGlyphs">Savannakhet</text>
                  <text x="435" y="1305" class="water" font-size="21" textLength="81" lengthAdjust="spacingAndGlyphs">Mekong</text>
                  <text x="313" y="1380" font-size="24" textLength="130" lengthAdjust="spacingAndGlyphs">Mukdahan</text>
                  <circle cx="515" cy="1253" r="5.500" fill="#000" /><circle cx="309" cy="1355" r="5.500" fill="#000" />
                </g>
              </g>
              <path d="M247 583L266 602M1557 583L1538 602M247 1489L266 1470M1557 1489L1538 1470" stroke="#fff" stroke-width="1.500" />
              <g fill="#419ddb">
                <path d="M842 597l10-11 10 11zM942 597l10-11 10 11zM842 1475h20l-10 11zM942 1475h20l-10 11z" />
                <path d="M262 976v20l-12-10zM262 1076v20l-12-10zM1542 976v20l12-10zM1542 1076v20l12-10z" />
              </g>
              <g class="dirs">
                <text x="902" y="598" textLength="66">NORTH</text><text x="902" y="1486" textLength="66">SOUTH</text>
                <text transform="translate(262 1036) rotate(-90)" textLength="54">WEST</text>
                <text transform="translate(1554 1036) rotate(-90)" textLength="48">EAST</text>
              </g>
            </svg>
          </div>
        </section>

        <section class="right">
          <p class="contact">To order call: 303.684.4561 or 800.496.1225<br>Email: CustomerCare@digitalglobe.com<br>or contact your DigitalGlobe reseller</p>
          <div class="panel filter">
            <h3>Search Filter</h3>
            <div class="criteria">
              <div><b>Acquisition Date:</b><span>4/1/11 - 12/4/15</span></div>
              <div><b>Off Nadir Angle:</b><span>0.0 - 25.0 degrees</span></div>
              <div><b>Cloud Cover:</b><span>0 - 20 %</span></div>
            </div>
            <div class="buttons">
              <svg class="btn" viewBox="0 0 158 60">
                <text x="12" y="38" textLength="75" lengthAdjust="spacingAndGlyphs"><tspan font-size="24">S</tspan><tspan font-size="19">EARCH</tspan></text>
                <path d="M116 6h12v48h-12zM136 6h12v48h-12z" fill="#a7b3c8" stroke="#419ddb" stroke-width="5" />
                <circle cx="118" cy="33" r="20" fill="#b9c6da" stroke="#ff6400" stroke-width="3.500" />
                <path d="M108 18v27h14V18" fill="#e4e9f1" stroke="#419ddb" stroke-width="4" /><path d="M133 22v22" stroke="#419ddb" stroke-width="3" />
                <path d="M106 50l-8 8h-8l10-10z" fill="#ff6400" stroke="#ff6400" />
              </svg>
              <svg class="btn" viewBox="0 0 158 60">
                <text x="14" y="27" textLength="71" lengthAdjust="spacingAndGlyphs"><tspan font-size="23">M</tspan><tspan font-size="18">ODIFY</tspan></text>
                <text x="20" y="50" textLength="58" lengthAdjust="spacingAndGlyphs"><tspan font-size="23">F</tspan><tspan font-size="18">ILTER</tspan></text>
                <path d="M100.500 6v20M119.500 6v40M138.500 6v20" stroke="#419ddb" stroke-width="4" />
                <path d="M93 21h15l-7.500 14zM131 21h15l-7.500 14zM112 42h15l-7.500 14z" fill="#419ddb" />
                <path d="M90 39h22M128 39h22" stroke="#ff6400" stroke-width="6.500" />
              </svg>
            </div>
          </div>

          <div class="panel status">
            <h3>Map Status</h3>
            <div class="facts">
              <div><b>Lon:</b><span><b>Area:</b> 49 km<sup>2</sup></span></div>
              <div><b>Lat:</b><span><b>Scale:</b> 1:154,472</span></div>
            </div>
            <svg class="mini" viewBox="1602 1000 476 322">
              <rect x="1602" y="1000" width="476" height="322" fill="#9dbad8" />
              <g transform="translate(1580 860) scale(.333333 .446429)" fill="#f1ece6" stroke="#8f8f8f" stroke-width="2" stroke-linejoin="round">
                <path :d="coast" vector-effect="non-scaling-stroke" />
                <path :d="provinces" fill="none" stroke="#ccc" vector-effect="non-scaling-stroke" />
                <path :d="borders" fill="none" vector-effect="non-scaling-stroke" />
                <path v-for="s in islands" :key="s" :d="s" vector-effect="non-scaling-stroke" />
                <path d="M1360 905V980M995 765l25-18M1040 862h60M1065 710l40 15 8 30M1060 750l30-5M1150 855l8 25M1105 895l20 5M1130 912h60M1190 880l30 10M1220 910h25M1205 960v8M930 970h50M985 975h70M1015 988h40M1150 558h8M590 718h8M660 860l15 8M1425 355l60-22M800 905h35M205 400l60-10M220 385l40 15M515 545v40M520 560l40 20M540 590l30 10M885 855l60-8 30-30 15 5" fill="none" vector-effect="non-scaling-stroke" />
                <path d="M768 663H798V685H768z" fill="#f00" stroke="none" />
              </g>
              <text x="1717" y="1278" class="water" textLength="124" lengthAdjust="spacingAndGlyphs">Indian Ocean</text>
            </svg>
          </div>

          <div class="submit">
            <svg class="btn" viewBox="0 0 158 60">
              <text x="12" y="38" font-weight="bold" textLength="87" lengthAdjust="spacingAndGlyphs"><tspan font-size="24">S</tspan><tspan font-size="18">UBMIT</tspan></text>
              <path d="M106 19l16 11-16 11z" fill="#8b5236" /><path d="M116 19l16 11-16 11z" fill="#c5591b" /><path d="M126 19l20 11-20 11z" fill="#ff6400" />
            </svg>
            <p>Email an order inquiry to<br>Customer Service.</p>
          </div>
        </section>
      </main>
      <footer>© 1995-2015 DigitalGlobe Inc.</footer>
    </div>
  </div>
</template>

<style>
body { margin: 0; background: #fff; }
</style>

<style scoped>
* { box-sizing: border-box; }
.desktop { width: 3096px; height: 1978px; overflow: hidden; background: #fff; font-family: "Liberation Sans", "Noto Sans CJK JP", sans-serif; font-size: 22px; color: #000; display: flex; align-items: flex-start; }
.defs { position: absolute; }
svg { display: block; flex: none; }
p, h3 { margin: 0; }
.window { width: 2872px; height: 1755px; margin: 63px 0 0 112px; border-radius: 10px; overflow: hidden; background: #fff; display: flex; flex-direction: column; box-shadow: 0 0 0 1px rgba(0,0,0,.25), 0 50px 75px rgba(0,0,0,.5), 0 10px 60px rgba(0,0,0,.2); }

.tabbar { height: 74px; flex: none; display: flex; align-items: flex-start; background: linear-gradient(#ececec, #dcdcdc); border-top: 2px solid #f4f4f4; border-bottom: 2px solid #9a9a9a; }
.lights { display: flex; gap: 16px; padding: 25px 0 0 24px; width: 146px; flex: none; }
.lights i { width: 24px; height: 24px; border-radius: 50%; }
.red { background: #fc5058; border: 1px solid #e0383f; } .amber { background: #fdb743; border: 1px solid #dd9a35; } .green { background: #00cc52; border: 1px solid #00a740; }
.tabs { display: flex; width: 2536px; padding-top: 22px; flex: none; }
.tab { position: relative; width: 338px; height: 50px; margin-right: -24px; flex: none; display: flex; align-items: center; padding-left: 32px; }
.tab.active { z-index: 2; }
.shape { position: absolute; left: 0; top: 0; width: 338px; height: 50px; overflow: visible; }
.shape path { fill: #d3d3d3; stroke: #8f8f8f; stroke-width: 1.5; }
.active .shape { height: 52px; }
.active .shape path { fill: #eee; }
.favicon { position: relative; width: 32px; height: 32px; }
.title { position: relative; font-size: 24px; letter-spacing: -.25px; line-height: 32px; white-space: nowrap; overflow: hidden; -webkit-mask-image: linear-gradient(90deg, #000 76%, transparent 100%); mask-image: linear-gradient(90deg, #000 76%, transparent 100%); }
.title.cjk { font-size: 23px; letter-spacing: -.4px; }
.close { position: relative; width: 15px; height: 15px; margin-left: 10px; }
.close path { stroke: #5a5a5a; stroke-width: 3; fill: none; }
.newtab { width: 66px; height: 34px; margin: 31px 0 0 -9px; }
.newtab path { fill: #d3d3d3; stroke: #999; stroke-width: 1.5; }
.user { width: 117px; height: 53px; margin: 11px 0 0 7px; border: 1.5px solid #a5a5a5; border-radius: 6px; background: #e6e6e6; font-size: 24px; line-height: 54px; text-align: center; }

.toolbar { height: 66px; flex: none; display: flex; align-items: center; background: linear-gradient(#ebebeb, #dfdfdf); }
.nav { width: 160px; height: 40px; margin: 2px 8px 0 16px; }
.omnibox { width: 2488px; height: 54px; margin-top: 2px; border: 2px solid #999; border-radius: 6px; background: #fff; display: flex; align-items: center; padding-left: 12px; flex: none; }
.lock { width: 25px; height: 32px; }
.url { margin-left: 14px; padding-top: 2px; font-size: 30px; line-height: 40px; color: #666; width: 2348px; white-space: nowrap; }
.url b { font-weight: normal; color: #0a9b2c; } .url em { font-style: normal; color: #000; }
.devices { width: 32px; height: 34px; }
.star { width: 36px; height: 34px; margin-left: 10px; }
.elephant { width: 26px; height: 30px; margin-left: 23px; }
.drive { width: 38px; height: 33px; margin-left: 33px; }
.burger { margin-left: 29px; display: flex; flex-direction: column; gap: 4px; }
.burger i { width: 30px; height: 6px; border-radius: 3px; background: #505050; }

.bookmarks { height: 51px; flex: none; display: flex; align-items: flex-start; padding: 6px 0 0 16px; background: linear-gradient(#dfdfdf, #d3d3d3); border-bottom: 2px solid #8b8b8b; font-size: 23px; line-height: 32px; white-space: nowrap; }
.apps { width: 28px; height: 28px; margin-top: 1px; }
.applabel { width: 99px; margin-left: 13px; flex: none; font-size: 22px; }
.marks { display: flex; gap: 22px; flex: none; }
.marks svg, .folder { width: 32px; height: 32px; }
.folder { width: 33px; }
.marks + .folder { margin-left: 23px; }
.f1 { width: 78px; margin-left: 9px; flex: none; } .f2 { width: 173px; margin-left: 9px; flex: none; } .more { width: 39px; flex: none; font-size: 27px; color: #444; }
.f3 { margin-left: 10px; font-size: 22.5px; }

.banner { height: 124px; flex: none; background: #003a5d; border-bottom: 4px solid #246993; display: flex; align-items: flex-start; }
nav { width: 1240px; padding: 48px 0 0 40px; flex: none; display: flex; color: #fff; line-height: 26px; }
nav a { color: #419ddb; text-decoration: underline; } nav span { margin: 0 18px 0 18px; }
.brand { width: 368px; height: 76px; margin-top: 26px; }
.brand text { font-family: Roboto, sans-serif; font-weight: 300; font-size: 48px; fill: #fff; }
.dg { width: 290px; height: 104px; margin: 6px 0 0 946px; }
.dg text { font-family: "Open Sans", sans-serif; font-weight: 600; font-size: 53px; fill: #fff; }

.page { display: flex; height: 1368px; flex: none; }
.left { width: 1446px; padding-top: 12px; flex: none; }
.menu { display: flex; gap: 4px; margin-left: 2px; height: 40px; color: #036; line-height: 29px; text-align: center; }
.menu span { width: 268px; background: #e2e5ed; } .menu .first { width: 308px; }
.tools { display: flex; align-items: flex-start; margin: 22px 0 0 132px; height: 60px; }
.group { display: flex; gap: 12px; margin-right: 34px; }
.group svg { width: 80px; height: 60px; border: 2px solid #000; background: #fff; }
.goto { margin-left: 116px; line-height: 61px; width: 77px; white-space: nowrap; }
.input { width: 220px; height: 34px; margin-top: 13px; border: 2px solid #c6c6c6; border-width: 2px 1px 2px 1px; }
.go { width: 36px; height: 42px; margin: 9px 0 0 3px; }
.note { margin: 12px 0 0 132px; line-height: 26px; height: 44px; white-space: nowrap; letter-spacing: .04px; }
.workspace { display: flex; margin-top: 14px; }
.side { width: 134px; padding-left: 16px; margin-top: -14px; display: flex; flex-direction: column; flex: none; }
.tool { width: 80px; height: 60px; border: 2px solid #000; margin-bottom: 12px; background: #fff; }
.tool.on { background: #badbf1; }
.zlabel { width: 100px; height: 24px; margin-left: -10px; }
.zin { margin-top: 76px; margin-bottom: 12px; }
.zlabel text { font-family: "Noto Sans", sans-serif; font-weight: 600; font-size: 21px; fill: #036; }
.zbtn { width: 80px; height: 40px; margin: 0 0 20px 2px; border: 2px solid #000; background: #419ddb; }
.zbtn svg { width: 76px; height: 36px; } .zbtn path { stroke: #fff; stroke-width: 3.5; }
.zbtn.last { margin-bottom: 12px; }
.level { width: 80px; height: 20px; margin: 0 0 20px 2px; border: 2.5px solid #000; background: #b7bfd1; }
.level.cur { background: #ff6400; }
.map { width: 1312px; height: 908px; }
.scale text { font-family: "DejaVu Sans", sans-serif; font-size: 19.5px; fill: #333; }
.labels text { font-family: "DejaVu Sans", sans-serif; fill: #444; }
.labels .water, .water { font-family: "DejaVu Sans", sans-serif; font-style: italic; fill: #2a22dc; }
.mini .water { font-size: 19px; }
.labels .country { font-weight: bold; font-size: 30px; fill: #666; stroke: #fff; stroke-width: 3; paint-order: stroke; }
.labels .halo { stroke: #fff; stroke-width: 3; stroke-opacity: .7; paint-order: stroke; }
.dirs text { font-family: "Open Sans", sans-serif; font-weight: bold; font-size: 16px; fill: #fff; text-anchor: middle; }

.right { width: 600px; padding: 4px 0 0 0; }
.contact { line-height: 30px; height: 250px; white-space: nowrap; letter-spacing: .04px; }
.panel { width: 484px; margin-left: 40px; border: 2px solid #036; background: #fff; }
.panel h3 { height: 44px; padding-left: 20px; background: #419ddb; color: #fff; font-size: 22px; line-height: 34px; }
.filter { height: 222px; }
.criteria { padding: 9px 0 0 20px; line-height: 28px; white-space: nowrap; }
.criteria span { margin-left: 19px; }
.buttons { display: flex; justify-content: space-between; padding: 9px 20px 0; }
.btn { width: 158px; height: 60px; border: 2px solid #000; background: #036; }
.btn text { font-family: "Noto Sans", sans-serif; font-weight: 500; fill: #dde5ee; }
.status { height: 450px; margin-top: 20px; }
.status h3 { line-height: 32px; }
.facts { height: 80px; border-bottom: 2px solid #036; padding: 10px 20px 0; line-height: 34px; }
.facts div { display: flex; justify-content: space-between; height: 34px; }
.facts div:first-child { height: 32px; }
.facts div:first-child span { padding-top: 2px; }
sup { font-size: 22px; line-height: 0; vertical-align: 7px; }
.mini { width: 476px; height: 322px; margin-left: 2px; }
.submit { width: 480px; height: 112px; margin: 100px 0 0 40px; border: 2px solid #036; background: #badbf1; display: flex; padding: 20px; line-height: 24px; }
.submit p { margin: -5px 0 0 20px; white-space: nowrap; }
footer { text-align: center; line-height: 26px; margin-top: -3px; }
</style>
